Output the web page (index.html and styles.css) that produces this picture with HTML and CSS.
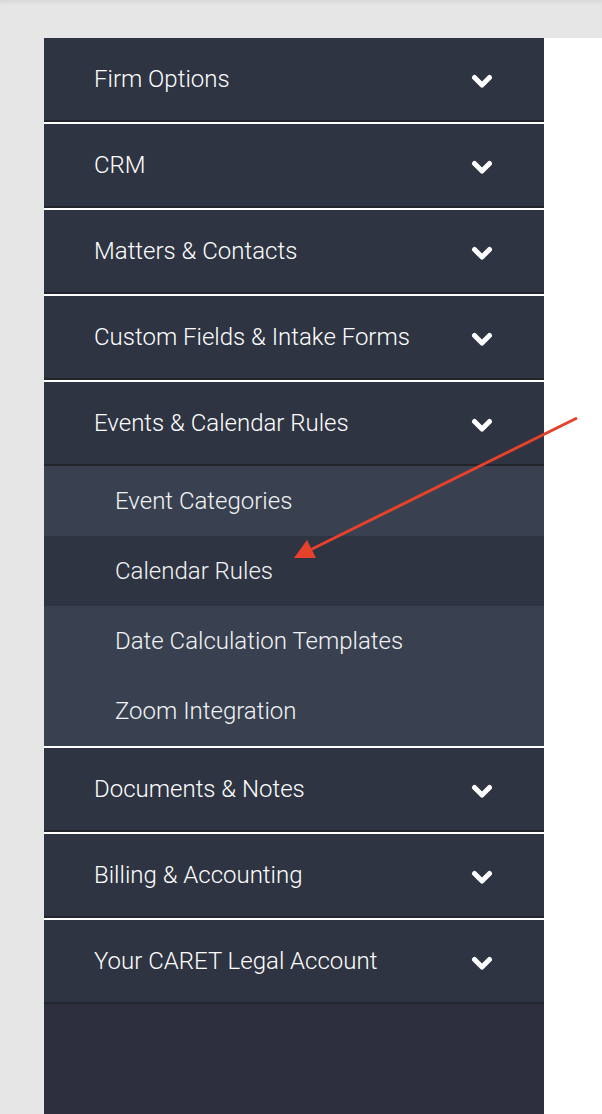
FILE: index.html
```html
<!DOCTYPE html>
<html lang="en">
<head>
  <meta charset="UTF-8" />
  <meta name="viewport" content="width=device-width, initial-scale=1.0"/>
  <title>Settings – Menu</title>
  <link rel="stylesheet" href="styles.css">
</head>
<body>
  <svg width="0" height="0" style="position: absolute;">
    <symbol id="chev" viewBox="0 0 22 15">
      <polyline points="3.5,3.5 11,11 18.5,3.5" fill="none" stroke="currentColor" stroke-width="5" stroke-linecap="round" stroke-linejoin="round"/>
    </symbol>
  </svg>

  <div class="page">
    <nav class="sidebar">
      <div class="section">
        <div class="section-head"><span>Firm Options</span><svg class="chevron"><use href="#chev"/></svg></div>
      </div>
      <div class="section">
        <div class="section-head"><span>CRM</span><svg class="chevron"><use href="#chev"/></svg></div>
      </div>
      <div class="section">
        <div class="section-head"><span>Matters &amp; Contacts</span><svg class="chevron"><use href="#chev"/></svg></div>
      </div>
      <div class="section">
        <div class="section-head"><span>Custom Fields &amp; Intake Forms</span><svg class="chevron"><use href="#chev"/></svg></div>
      </div>
      <div class="section open">
        <div class="section-head"><span>Events &amp; Calendar Rules</span><svg class="chevron"><use href="#chev"/></svg></div>
        <ul class="submenu">
          <li>Event Categories</li>
          <li class="active">Calendar Rules</li>
          <li>Date Calculation Templates</li>
          <li>Zoom Integration</li>
        </ul>
      </div>
      <div class="section">
        <div class="section-head"><span>Documents &amp; Notes</span><svg class="chevron"><use href="#chev"/></svg></div>
      </div>
      <div class="section">
        <div class="section-head"><span>Billing &amp; Accounting</span><svg class="chevron"><use href="#chev"/></svg></div>
      </div>
      <div class="section">
        <div class="section-head"><span>Your CARET Legal Account</span><svg class="chevron"><use href="#chev"/></svg></div>
      </div>
    </nav>
    <main class="content"></main>

    <!-- callout arrow drawn over the screenshot -->
    <svg class="callout" viewBox="0 0 602 1114">
      <line x1="577" y1="418" x2="306" y2="552" stroke="#e5412b" stroke-width="3"/>
      <polygon points="294,558 307,540 316,558" fill="#e5412b"/>
    </svg>
  </div>
</body>
</html>
```

FILE: styles.css
```css
:root {
  --cor-fundo: #e6e6e6;
  --cor-menu: #2e3442;
  --cor-sub: #394150;
  --cor-resto: #2d2f3e;
  --cor-linha: #22252c;
}
* { box-sizing: border-box; margin: 0; padding: 0; }
body {
  font-family: Roboto, "Liberation Sans", sans-serif;
  background: var(--cor-fundo);
  color: #fff;
}
.page {
  position: relative;
  display: flex;
  min-height: 100vh;
  padding: 38px 0 0 44px;
  background: var(--cor-fundo);
  box-shadow: inset 0 5px 5px -3px rgba(0,0,0,0.07);
}
.sidebar {
  width: 500px;
  background: var(--cor-resto);
}
.content {
  flex: 1;
  background: #fff;
}
.section + .section {
  border-top: 2px solid #fff;
}
.section-head {
  height: 84px;
  display: flex;
  align-items: center;
  justify-content: space-between;
  padding: 0 51px 0 50px;
  background: var(--cor-menu);
  border-bottom: 2px solid var(--cor-linha);
  font-size: 24px;
  font-weight: 300;
}
.section-head span {
  margin-top: -1px;
}
.chevron {
  width: 22px;
  height: 15px;
  color: #fff;
  margin-top: 4px;
}
.submenu {
  list-style: none;
  background: var(--cor-sub);
}
.submenu li {
  height: 70px;
  display: flex;
  align-items: center;
  padding-left: 71px;
  font-size: 24px;
  font-weight: 300;
  color: #f2f3f5;
}
.submenu li.active {
  background: var(--cor-menu);
}
.callout {
  position: absolute;
  top: 0;
  left: 0;
  width: 602px;
  height: 1114px;
  pointer-events: none;
}
```
